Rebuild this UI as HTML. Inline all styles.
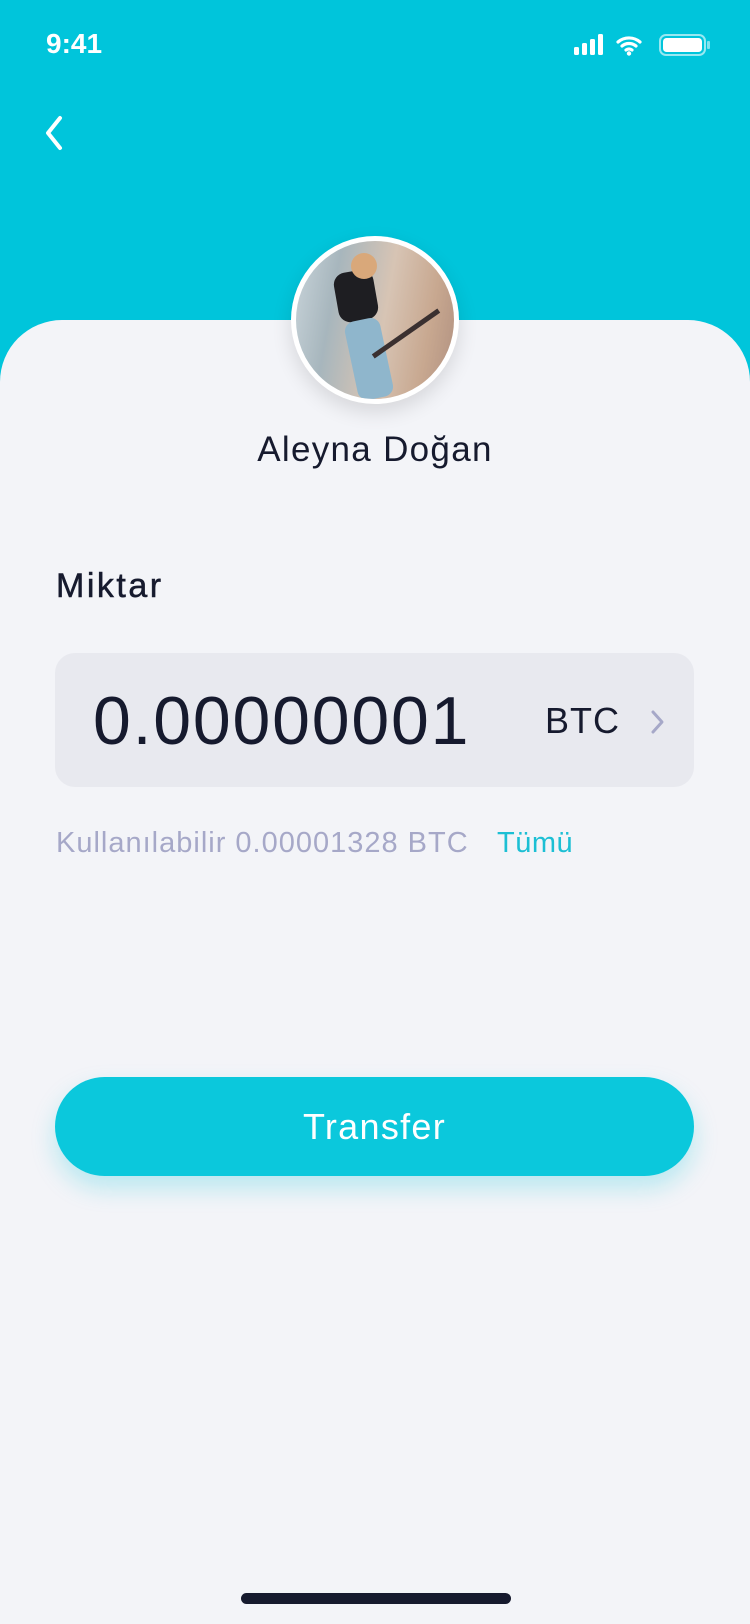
<!DOCTYPE html>
<html><head><meta charset="utf-8"><style>
*{margin:0;padding:0;box-sizing:border-box}
body{width:750px;height:1624px;background:#f3f4f8;font-family:"Liberation Sans",sans-serif;position:relative;overflow:hidden}
.hdr{position:absolute;left:0;top:0;width:750px;height:400px;background:#00c5db}
.card{position:absolute;left:0;top:320px;width:750px;height:1304px;background:#f3f4f8;border-radius:62px 62px 0 0}
.t{position:absolute;white-space:nowrap}
</style></head><body>
<div class="hdr"></div>
<div class="card"></div>
<div class="t" style="left:46px;top:28px;color:#fff;font-size:28px;font-weight:bold">9:41</div>
<svg style="position:absolute;left:572px;top:32px" width="140" height="26" viewBox="0 0 140 26">
<rect x="2" y="15" width="5" height="8" rx="1.5" fill="#fff"/><rect x="10" y="11" width="5" height="12" rx="1.5" fill="#fff"/><rect x="18" y="7" width="5" height="16" rx="1.5" fill="#fff"/><rect x="26" y="2" width="5" height="21" rx="1.5" fill="#fff"/>
<path d="M46 10a17 17 0 0 1 22 0M50 14a11 11 0 0 1 14 0M54 18a5 5 0 0 1 6 0" stroke="#fff" stroke-width="3.2" fill="none" stroke-linecap="round"/><circle cx="57" cy="21.5" r="2.2" fill="#fff"/>
<rect x="88" y="3" width="45" height="20" rx="6" fill="none" stroke="#fff" stroke-opacity=".6" stroke-width="2"/><rect x="91" y="6" width="39" height="14" rx="3.5" fill="#fff"/><rect x="135" y="9" width="3" height="8" rx="1" fill="#fff" fill-opacity=".5"/>
</svg>
<svg style="position:absolute;left:40px;top:114px" width="30" height="38" viewBox="0 0 30 38"><path d="M20 4L8 19l12 15" stroke="#fff" stroke-width="4" fill="none" stroke-linecap="round" stroke-linejoin="round"/></svg>
<div style="position:absolute;left:291px;top:236px;width:168px;height:168px;border-radius:50%;background:#fff;box-shadow:0 8px 20px rgba(0,0,0,.12);padding:5px">
<div style="width:100%;height:100%;border-radius:50%;overflow:hidden;background:linear-gradient(100deg,#c9d4da 0%,#a7b6bd 25%,#d7c4b4 55%,#c8a890 80%,#b09080 100%);position:relative">
<div style="position:absolute;left:40px;top:30px;width:40px;height:50px;background:#1e1e22;border-radius:12px;transform:rotate(-10deg)"></div>
<div style="position:absolute;left:55px;top:12px;width:26px;height:26px;background:#d9a87a;border-radius:50%"></div>
<div style="position:absolute;left:55px;top:78px;width:36px;height:80px;background:#8fb6cc;border-radius:10px;transform:rotate(-12deg)"></div>
<div style="position:absolute;left:70px;top:90px;width:80px;height:5px;background:#3a3030;transform:rotate(-35deg)"></div>
</div></div>
<div class="t" style="left:0;width:750px;text-align:center;top:430px;font-size:35px;letter-spacing:1.3px;color:#161a2e">Aleyna Doğan</div>
<div class="t" style="left:56px;top:567px;font-size:34px;letter-spacing:2.5px;color:#161a2e;-webkit-text-stroke:0.5px #161a2e">Miktar</div>
<div style="position:absolute;left:55px;top:653px;width:639px;height:134px;background:#e8e9ef;border-radius:20px"></div>
<div class="t" style="left:93px;top:682px;font-size:68px;letter-spacing:1.8px;color:#161a2e;line-height:78px">0.00000001</div>
<div class="t" style="left:545px;top:700px;font-size:36px;letter-spacing:1px;color:#161a2e">BTC</div>
<svg style="position:absolute;left:648px;top:708px" width="18" height="28" viewBox="0 0 18 28"><path d="M5 4l9 10-9 10" stroke="#a6a8c8" stroke-width="3" fill="none" stroke-linecap="round" stroke-linejoin="round"/></svg>
<div class="t" style="left:56px;top:827px;font-size:29px;letter-spacing:1px;color:#a6a8c8">Kullanılabilir 0.00001328 BTC</div>
<div class="t" style="left:497px;top:827px;font-size:29px;letter-spacing:0.5px;color:#1cbfd4">Tümü</div>
<div style="position:absolute;left:55px;top:1077px;width:639px;height:99px;background:#0bc8dc;border-radius:50px;box-shadow:0 12px 24px rgba(11,200,220,.25);color:#fff;font-size:36px;letter-spacing:1.3px;text-align:center;line-height:99px">Transfer</div>
<div style="position:absolute;left:241px;top:1593px;width:270px;height:11px;border-radius:6px;background:#161a2e"></div>
</body></html>
